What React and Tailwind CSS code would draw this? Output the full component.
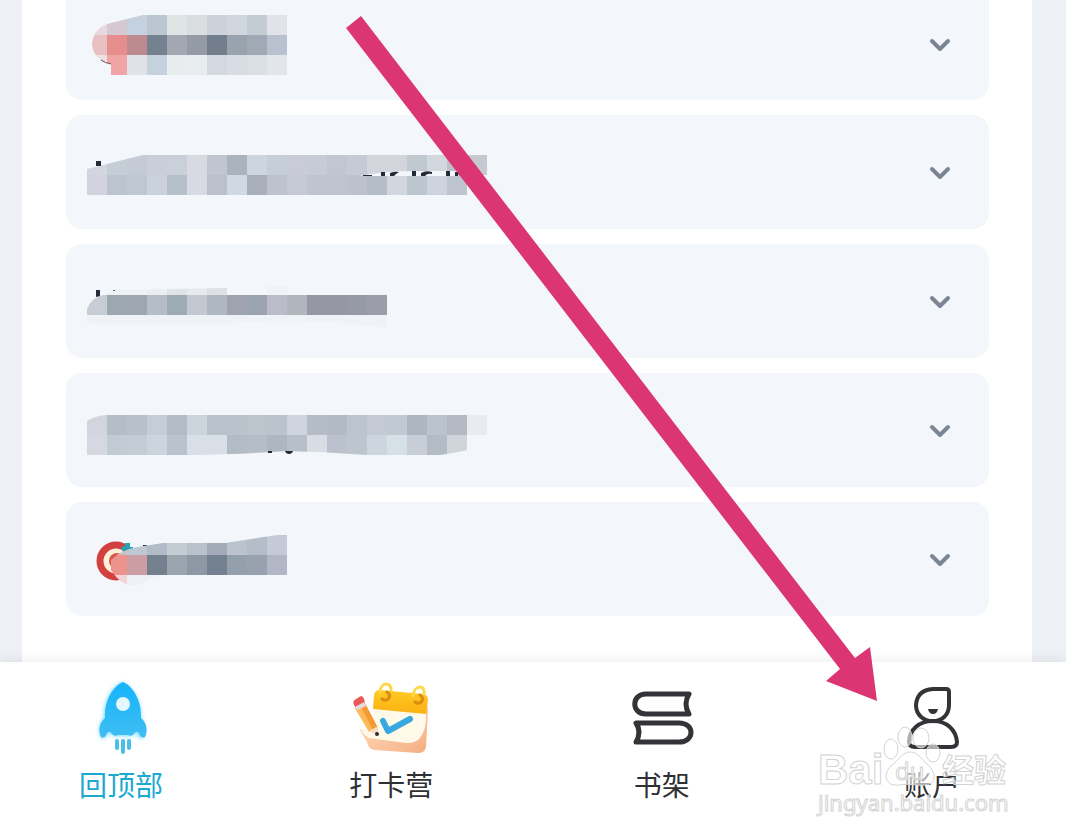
import React, { useState } from 'react';

const CELL = 20;

// Every row lists its cells left to right, starting at `x`
const lessons = [
  {
    id: 'one',
    height: 100,
    clip: 'M5 44 C6 33 12 27 20 24 L56 15 H200 V75 H24 V64 C14 62 6 56 5 44 Z',
    bands: [
      { x: 0, y: 15, cells: ['#e6d8dd', '#d6c8d0', '#c3d2de', '#bac6d0', '#dfe4e5', '#dadee0', '#ccd2da', '#cfd6dd', '#c3cbd3', '#e0e3e7'] },
      { x: 0, y: 35, cells: ['#e9c0c2', '#e58e8b', '#bd8a90', '#74818f', '#a3a7b2', '#949ba6', '#727e8c', '#98a3ad', '#a0aab5', '#b9c0d0'] },
      { x: 0, y: 55, cells: ['#eedfe2', '#f0a4a5', '#e0e2e8', '#c5d1dd', '#e8ecef', '#e8edf0', '#d2d9e1', '#d8dde3', '#dadfe4', '#e2e6ea'] },
    ],
    extra: <path d="M14 60 Q18 63 24 64" stroke="#6b4a55" strokeWidth="1" fill="none" />,
  },
  {
    id: 'two',
    height: 114,
    clip: 'M0 54 L56 40 H400 V61 H380 V80 H0 Z',
    bands: [
      { x: 0, y: 40, cells: ['#d4d6df', '#c5cdd6', '#c5cbd5', '#c9ced8', '#c9d0d9', '#d9d9e1', '#c0c6cf', '#abb4bd', '#cdd5de', '#c6ced7', '#c9cbd7', '#c7cbd5', '#c0c7d0', '#c5cad4', '#d2d5db', '#d2d6dc', '#c0c8d0', '#d3d8df', '#babfc8', '#c5cad2'] },
      { x: 0, y: 60, cells: ['#d2d3de', '#bcc5cf', '#bfc7d1', '#cbd2dc', '#b5c0c9', '#d9d9e3', '#bac1cb', '#d0d9e2', '#a8afb9', '#bcc3cd', '#c5c9d4', '#bfc5cf', '#bdc4ce', '#bbc2cb', '#b5bdc6', '#d2d6de', '#bdc5ce', '#cdd4dd', '#bfc5cf'] },
    ],
    extra: (
      <>
        <path d="M9 46h5v5h-5z" fill="#232a3a" />
        <path d="M272 61 Q300 56 326 56 H384 V61 Z" fill="#f3f7fb" />
        <path d="M276 60h9v1h-9zM294 57h4v4h-4zM303 61v-3q5-2 9-1l-3 2l-2 2zM325 56h4v5h-4zM334 61v-3q5-3 11-1v2q-5-1-7 2zM359 56h4v5h-4zM368 61v-4h7l2 4h-4l-2-2v2z" fill="#232a3a" />
      </>
    ),
  },
  {
    id: 'three',
    height: 114,
    clip: 'M0 65 Q4 54 16 51 L30 46 L140 44 V51 H300 V71 H0 Z',
    bands: [
      { x: 0, y: 31, cells: ['#f3f7fb', '#eef2f6', '#eef1f5', '#eaeef2', '#dfe4ea', '#e6eaee', '#dde1e6'] },
      { x: 0, y: 51, cells: ['#c8cdd5', '#9ca8b1', '#9da6b1', '#b5bdc7', '#9dabb4', '#c2c9d1', '#afb7c0', '#a0a4b1', '#9ba2b0', '#babdc8', '#b0b6be', '#9598a3', '#9598a3', '#969aa5', '#9b9ea9'] },
    ],
    extra: (
      <>
        <path d="M9 46h4v6l-4 1z" fill="#232a3a" />
        <path d="M26 46h2v1h-2z" fill="#5b6270" />
        <path d="M180 42h20v9h-20z" fill="#eff3f7" />
        <path d="M0 71 H300 V84 Q210 72 140 80 H24 L0 79 Z" fill="#eff2f7" />
      </>
    ),
  },
  {
    id: 'four',
    height: 114,
    clip: 'M0 48 Q8 43 18 42 H400 V62 H380 V77 Q368 80 352 82 H280 Q240 79 200 78 Q160 81 100 82 H0 Z',
    bands: [
      { x: 0, y: 42, cells: ['#d2d4de', '#b5bec8', '#b8c1ca', '#c5ced6', '#b3bbc4', '#ccd4dc', '#b9c2cb', '#bac3cc', '#bcc4cc', '#bbc4cd', '#cfd4de', '#b4bcc6', '#b3bac3', '#bcc5ce', '#c3cad5', '#c1cad3', '#aeb7c1', '#bbc4cd', '#b3bac4', '#e8ebef'] },
      { x: 0, y: 62, cells: ['#d5d8e1', '#c2cad4', '#c4ccd6', '#ccd5de', '#bac3cd', '#d8dfe7', '#d8dfe7', '#b3bbc5', '#b5bec7', '#aeb7c1', '#b7bfca', '#d8dce3', '#bcc2cd', '#bdc5cf', '#cdd6de', '#d5e0e7', '#c7ced8', '#b3bbc5', '#cfd6db'] },
    ],
    extra: <path d="M181 78h4v2h-4zM198 78h8q-1 3 -4 3t-4-3z" fill="#232a3a" />,
  },
  {
    id: 'five',
    height: 114,
    clip: 'M24 58 Q34 48 50 45 L76 41 H138 L190 33 H200 V73 H74 L48 84 Q34 84 24 68 Z',
    bands: [
      { x: 20, y: 33, cells: ['#cdc0c7', '#bcc8d2', '#b2bcc6', '#c3cbd3', '#b9c2cb', '#a2abb7', '#bbc4cd', '#b5bdc8', '#c5cad8'] },
      { x: 20, y: 53, cells: ['#ee928e', '#cb9ea3', '#74808e', '#9ba5b0', '#8c98a4', '#73808f', '#93a0ac', '#98a1ae', '#b1b7c6'] },
      { x: 20, y: 73, cells: ['#f3d3d6', '#edf0f4', '#eff2f6'] },
    ],
    before: (
      <>
        <circle cx="29" cy="59" r="16" fill="#fdf0d8" stroke="#d2403f" strokeWidth="7" />
        <circle cx="30" cy="59" r="8" fill="#d9564f" />
        <path d="M34 45l4-1v-3h5v4h3v3l-10 2z" fill="#27a0b5" />
        <path d="M46 46h14v34h-14z" fill="#f3f7fb" />
        <path d="M56 43h4v4h-4z" fill="#232a3a" />
      </>
    ),
  },
];

function Mosaic({ lesson }) {
  const clipId = `mosaic-${lesson.id}`;
  return (
    <svg width="420" height={lesson.height} viewBox={`0 0 420 ${lesson.height}`} className="shrink-0" aria-hidden="true">
      <clipPath id={clipId}>
        <path d={lesson.clip} />
      </clipPath>
      {lesson.before}
      <g clipPath={`url(#${clipId})`} shapeRendering="crispEdges">
        {lesson.bands.map((band) =>
          band.cells.map((fill, i) => (
            <rect key={`${band.y}-${i}`} x={band.x + i * CELL} y={band.y} width={CELL} height={CELL} fill={fill} />
          ))
        )}
      </g>
      {lesson.extra}
    </svg>
  );
}

function LessonRow({ lesson, first, open, onToggle }) {
  return (
    <button
      type="button"
      aria-label="展开"
      aria-expanded={open}
      onClick={onToggle}
      className={`flex w-full justify-between bg-[#f3f7fb] pl-[21px] pr-9 cursor-pointer ${first ? 'items-start rounded-b-2xl' : 'items-center rounded-2xl'}`}
    >
      <Mosaic lesson={lesson} />
      <svg
        width="26"
        height="28"
        viewBox="0 0 26 28"
        className={`shrink-0 ${first ? 'mt-[30px]' : ''} ${open ? 'rotate-180' : ''}`}
        fill="none"
        stroke="#7c8593"
        strokeWidth="4"
        strokeLinecap="round"
        strokeLinejoin="round"
      >
        <path d="M5 11l8 8 8-8" />
      </svg>
    </button>
  );
}

function RocketIcon() {
  return (
    <svg width="80" height="80" viewBox="0 0 80 80">
      <defs>
        <linearGradient id="rocket" x1="0" y1="0" x2="0" y2="1">
          <stop offset="0" stopColor="#16b4fb" />
          <stop offset="1" stopColor="#3fbdf2" />
        </linearGradient>
        <filter id="rocket-glow" x="-20%" y="-20%" width="140%" height="140%">
          <feGaussianBlur stdDeviation="2" />
        </filter>
      </defs>
      <path d="M41 4C31 9 22 23 23 40C18 45 17 53 20 60Q24 62 26 56Q29 54 31 57Q34 60 37 58H45Q48 60 51 57Q53 54 56 56Q58 62 62 60C65 53 63 45 60 40C61 23 51 9 41 4Z" fill="#7edcff" filter="url(#rocket-glow)" />
      <path d="M42 4C32 8 23 23 24 40C18 45 17 53 20 59Q24 61 26 55Q29 52 31 56Q34 59 37 57H47Q50 59 53 56Q55 52 58 55Q60 61 64 59C67 53 66 45 60 40C61 23 52 8 42 4Z" fill="url(#rocket)" />
      <circle cx="42" cy="26" r="7" fill="#e3f7fd" />
      <path d="M36 63v7M42 63v11M48 63v7" stroke="#4abfe6" strokeWidth="4" strokeLinecap="round" />
    </svg>
  );
}

function CalendarIcon() {
  return (
    <svg width="80" height="80" viewBox="0 0 80 80">
      <defs>
        <linearGradient id="cal-base" x1="0" y1="0" x2="1" y2="1">
          <stop offset="0" stopColor="#ffe5c8" />
          <stop offset="1" stopColor="#f5ad80" />
        </linearGradient>
        <linearGradient id="cal-top" x1="0" y1="0" x2="0" y2="1">
          <stop offset="0" stopColor="#ffca24" />
          <stop offset="1" stopColor="#fcb112" />
        </linearGradient>
      </defs>
      <path d="M8 51Q16 54 22 50L72 24Q77 25 77 32L75 69Q74 75 67 75L24 72Q17 71 16 64Z" fill="url(#cal-base)" />
      <path d="M23 28L75 33Q76 48 71 57Q66 66 55 65L18 60Q14 58 10 53Q22 52 23 28Z" fill="#fff9ea" />
      <path d="M23 17Q24 12 29 12L71 16Q77 16 77 22L75 36L22 31Z" fill="url(#cal-top)" />
      <g fill="none" strokeLinecap="round">
        <path d="M29 15C29 3 41 4 40 12" stroke="#ffd84a" strokeWidth="3" />
        <path d="M62 18C63 6 75 7 73 16" stroke="#ffd84a" strokeWidth="3" />
        <path d="M36 14q4 3 2 6q-3 4-7 1M69 17q4 3 2 6q-3 4-7 1" stroke="#d98b12" strokeWidth="3" />
        <path d="M32 43L37 53L59 41" stroke="#37a9df" strokeWidth="6" strokeLinejoin="round" />
      </g>
      <path d="M4 30L14 25L26 48L26 56L18 53Z" fill="#f39a35" />
      <path d="M9 27L22 52L18 54L4 30Z" fill="#ffb957" />
      <path d="M18 53L27 48L27 57Z" fill="#f8dcc0" />
      <circle cx="26" cy="56" r="2" fill="#2f2b30" />
      <path d="M3 27Q1 23 5 21L10 18Q13 18 14 25L5 30Z" fill="#e95a55" />
      <path d="M4 29L13 24L15 28L6 32Z" fill="#e8d9e2" />
    </svg>
  );
}

function BooksIcon() {
  return (
    <svg width="80" height="80" viewBox="0 0 80 80" fill="none" stroke="#333437" strokeWidth="5" strokeLinejoin="round">
      <path d="M67 16H24C9 16 9 36 24 36H67Q61 26 67 16Z" />
      <path d="M14 45H57C73 45 73 64 57 64H14Q20 54 14 45Z" />
    </svg>
  );
}

function AccountIcon() {
  return (
    <svg width="80" height="80" viewBox="0 0 80 80" fill="none" stroke="#333437" strokeWidth="4" strokeLinejoin="round">
      <path d="M41 11H54Q57 11 57 14V27C57 49 24 48 24 27Q25 12 41 11Z" />
      <path d="M41 43C27 43 17 52 17 64Q17 69 23 69H59Q65 69 65 64C64 52 55 43 41 43Z" />
      <path d="M36 31H46Q45 36 41 36T36 31Z" fill="#333437" stroke="none" />
    </svg>
  );
}

const tabs = [
  { label: '回顶部', Icon: RocketIcon, active: true },
  { label: '打卡营', Icon: CalendarIcon },
  { label: '书架', Icon: BooksIcon },
  { label: '账户', Icon: AccountIcon },
];

function Watermark() {
  return (
    <svg
      width="200"
      height="100"
      viewBox="0 0 200 100"
      className="absolute right-[53px] bottom-5 pointer-events-none"
      fill="#ffffff"
      fillOpacity="0.6"
      stroke="#d3d3d3"
      strokeWidth="1"
    >
      <text x="5" y="64" fontSize="42" fontWeight="700" fontFamily="'Liberation Sans', sans-serif">Bai</text>
      <ellipse cx="78" cy="29" rx="7" ry="10" />
      <ellipse cx="92" cy="17" rx="7" ry="10" />
      <ellipse cx="108" cy="18" rx="8" ry="10" />
      <ellipse cx="120" cy="33" rx="7" ry="9" />
      <path d="M97 32C105 32 108 39 114 44C122 50 126 64 112 65C104 66 95 63 87 65C71 67 70 53 78 46C86 40 89 32 97 32Z" />
      <text x="82" y="60" fontSize="24" fontFamily="'Open Sans', sans-serif">du</text>
      <text x="129" y="62" fontSize="32" fontWeight="700" fontFamily="'Noto Sans CJK SC', sans-serif">经验</text>
      <text x="5" y="91" fontSize="22" fontFamily="'Noto Sans', sans-serif">jingyan.baidu.com</text>
    </svg>
  );
}

export default function App() {
  const [openId, setOpenId] = useState(null);

  return (
    <div className="relative min-h-screen overflow-hidden bg-[#edf1f5] font-['Liberation_Sans','Noto_Sans_CJK_SC',sans-serif]">
      {/* Lesson list */}
      <main className="ml-[22px] mr-[34px] flex flex-col gap-[15px] bg-white pl-11 pr-[43px] pb-[46px]">
        {lessons.map((lesson, idx) => (
          <LessonRow
            key={lesson.id}
            lesson={lesson}
            first={idx === 0}
            open={openId === lesson.id}
            onToggle={() => setOpenId(openId === lesson.id ? null : lesson.id)}
          />
        ))}
      </main>

      {/* Bottom tabs */}
      <nav className="relative flex justify-between bg-white pt-4 pb-8 pl-[73px] pr-[86px] shadow-[0_-2px_12px_rgba(0,0,0,0.07)]">
        {tabs.map(({ label, Icon, active }) => (
          <a
            key={label}
            href="#"
            className={`flex w-24 flex-col items-center gap-2 text-[28px] leading-[42px] ${active ? 'text-[#1ba9cf]' : 'text-[#2f3033]'}`}
          >
            <Icon />
            {label}
          </a>
        ))}
        <Watermark />
      </nav>

      {/* Pointer to the account tab */}
      <svg width="1066" height="840" viewBox="0 0 1066 840" className="absolute top-0 left-0 pointer-events-none">
        <path d="M346 28L361 16L855 658L870 647L877 701L826 681L840 669Z" fill="#db3573" />
      </svg>
    </div>
  );
}
